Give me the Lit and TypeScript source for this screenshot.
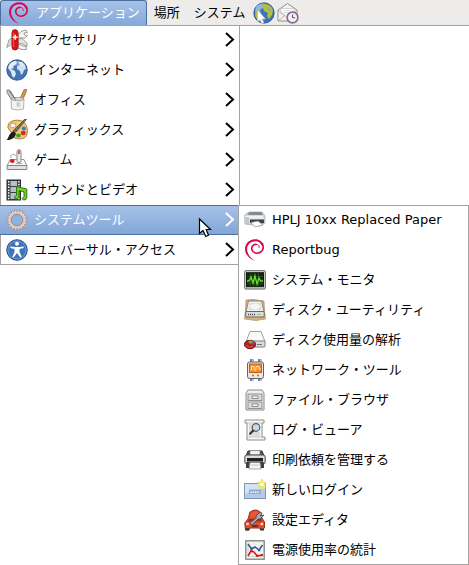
import { LitElement, html, css, svg, nothing, type SVGTemplateResult } from "lit";
import { customElement } from "lit/decorators.js";
import { classMap } from "lit/directives/class-map.js";

const swirl = svg`
  <path d="M11 22C4.800 19.500 1 15 1 10C1 4.500 5.500.4 11 .3C15.500.2 18.700 2.800 19.400 6.500L18 7C16.800 3.700 14.600 2.200 11.500 2.200C7.200 2.200 3.200 5.200 3.100 9.800C3 14.500 6 18.600 11 22Z" fill="#d70751"/>
  <path d="M18.400 4.600C19.800 8 19 11.500 16.300 13.300C13.200 15.200 9 14 8 11C7 8 9 5.300 12 5.400" fill="none" stroke="#d70751" stroke-width="1.600" stroke-linecap="round"/>
  <path d="M12 5.400C14.600 5.300 15.600 7 15 9" fill="none" stroke="#d70751" stroke-width=".9"/>`;

/** Outline of a cog with pointed teeth, centred in the 22-unit icon box. */
function cogOutline(teeth: number, inner: number, outer: number): string {
  const points: string[] = [];
  const step = (2 * Math.PI) / teeth;
  for (let i = 0; i < teeth; i++) {
    for (const [offset, radius] of [[-0.3, inner], [-0.14, outer], [0.14, outer], [0.3, inner]]) {
      const angle = (i + offset) * step;
      points.push(`${(11 + radius * Math.cos(angle)).toFixed(2)} ${(11 + radius * Math.sin(angle)).toFixed(2)}`);
    }
  }
  return `M${points.join("L")}Z`;
}

const icons: Record<string, SVGTemplateResult> = {
  swirl,
  browser: svg`
    <circle cx="11" cy="11" r="10.200" fill="#3c76b8" stroke="#244c83" stroke-width=".8"/>
    <path d="M3 5C6 1.500 10 1 12 2L11 5L7 8L8 11L4 12L2 9Z" fill="#8fb6dd"/>
    <path d="M8 3L12 2C16 2 19 5 20 8L19 13L16 17L14 14L15 11L11 9L10 6Z" fill="#b5bf3c"/>
    <path d="M14 5L17 7L18 10L16 9Z" fill="#7da2c4"/>
    <path d="M2.500 8.500L6 9L5 13L8 16L10 20C6 20 3 17 2 13Z" fill="#a7bd50"/>
    <path d="M4.500 8V20L7 17.600L9 21.500L11 20.500L9 17H12.500Z" fill="#fff" stroke="#b4babf" stroke-width=".6"/>`,
  mail: svg`
    <path d="M1 8L10.500 1.500L20 8V19H1Z" fill="#f2f2f0" stroke="#91918e"/>
    <path d="M4 6.500H17V12L11 15L4 12Z" fill="#fff" stroke="#c2c2bf" stroke-width=".7"/>
    <path d="M6 8.500H15M6 10.500H13" stroke="#d0d0cc" stroke-width=".7"/>
    <path d="M1.500 8.500L8 13.500L1.500 18.500M19.500 8.500L12 13.500" fill="none" stroke="#a3a3a0" stroke-width=".8"/>
    <circle cx="15.500" cy="15.500" r="5.400" fill="#f4f0f5" stroke="#8d6b94" stroke-width="1.700"/>
    <path d="M15.500 12.500V15.700H18" fill="none" stroke="#555"/>`,
  knife: svg`
    <path d="M7 8L3 11L.7 18.500L4 16.500L8 12Z" fill="#d9dbd7" stroke="#858984" stroke-width=".8"/>
    <path d="M12 6L15 2.500L20 1L21.500 3.500L18 4L18.500 6L21.500 6.500L19 9L12 9Z" fill="#f4f4f2" stroke="#858984" stroke-width=".8"/>
    <path d="M12 10L16 9.500L21 14L21 17.500L17 15L12 14Z" fill="#e3e5e1" stroke="#858984" stroke-width=".8"/>
    <path d="M12 15L17 17L20 17.500L20.500 20.500L16 20.500L12 19Z" fill="#f4f4f2" stroke="#858984" stroke-width=".8"/>
    <rect x="6" y=".7" width="6" height="20.300" rx="3" fill="#dd1515" stroke="#a81212"/>
    <path d="M7.400 3.500V18" stroke="#f45a50"/>
    <path d="M9.200 5.800V10.800M6.700 8.300H11.700" stroke="#fff" stroke-width="1.500"/>`,
  globe: svg`
    <circle cx="11" cy="11" r="10.200" fill="#4375b4" stroke="#2c5288" stroke-width=".9"/>
    <path d="M3 6C5 3 8 1.800 10 2L11 4L9 6L7 7L8 9L5 10L9 12L10 15L8 19L6 17L5 13L2 9Z" fill="#dce8f5"/>
    <path d="M12 3L16 3L19 6L20 10L18 11L17 14L15 16L14 12L11 10L11 7L14 6Z" fill="#d0e0f1"/>
    <path d="M2.500 9C3 0 18 -1 19.500 8C14 5.500 8 6 2.500 9Z" fill="#fff" opacity=".3"/>`,
  office: svg`
    <path d="M10 12L4 1.500Q2 0 .8 1.500Q1 5 7 12" fill="#cacdca" stroke="#777b76"/>
    <path d="M13 12L16.500 4L18 1L20.500 0L19.800 4L16 12" fill="#d69b43" stroke="#956629" stroke-width=".8"/>
    <path d="M5 10H18L17.500 20Q11.500 22 5.500 20Z" fill="#f2f2f0" stroke="#b3b5b1"/>
    <ellipse cx="11.500" cy="10" rx="6.500" ry="1.600" fill="#d8dad6" stroke="#8c8e8a" stroke-width=".7"/>
    <path d="M3.500 2L9.500 10.500" stroke="#747872" stroke-width="1.200"/>
    <path d="M10.500 13H14.500V18H10.500Z" fill="#d9dbd7"/><path d="M12 14V17" stroke="#c9ada0"/>`,
  graphics: svg`
    <path d="M2 9C1 2 9 .5 14 1.500C21 3 22 10 21 15C20 20.500 14 20.500 9 19C5 18 7 14 5 13Z" fill="#f0c57d" stroke="#b27b32"/>
    <ellipse cx="7" cy="6.500" rx="2.700" ry="2.300" fill="#fff" stroke="#b47c30" stroke-width=".7"/>
    <ellipse cx="13.500" cy="4.800" rx="2.200" ry="1.700" fill="#f3e34c"/>
    <circle cx="17.800" cy="9.500" r="2" fill="#3b79c3"/>
    <ellipse cx="17.300" cy="14" rx="2.500" ry="2.200" fill="#d92b26"/>
    <ellipse cx="12.500" cy="16.500" rx="2.500" ry="2" fill="#43a22b"/>
    <path d="M20.500 .3L10 13L7.500 11.500L18.500 .3Z" fill="#77736c" stroke="#353431" stroke-width=".7"/>
    <path d="M7.500 12L10 14.500C9 19 5 21.500 .5 21C3 19 2 15.500 7.500 12Z" fill="#1c1c1b"/>`,
  games: svg`
    <path d="M5 9C4 5 8 4 10 7" fill="none" stroke="#888" stroke-width=".8"/>
    <path d="M4 10.500H18L21 17H1Z" fill="#f6f6f4" stroke="#969893"/>
    <path d="M1.200 16.500H20.800V20.500H1.200Z" fill="#e0e1de" stroke="#858782"/>
    <rect x="11" y=".7" width="4" height="13" rx="2" fill="#ececea" stroke="#898b87"/>
    <path d="M13 1.500V5" stroke="#e32424" stroke-width="1.500"/>
    <ellipse cx="6.300" cy="12" rx="2.300" ry="1.900" fill="#dc1717"/>
    <path d="M10 14.500H16" stroke="#aaa"/>`,
  media: svg`
    <rect x="1" y="1" width="13.500" height="20" fill="#3e4140" stroke="#292b2a"/>
    <path d="M4.500 2H11V7H4.500ZM4.500 8H11V13H4.500ZM4.500 14H11V20H4.500Z" fill="#b3c2cd"/>
    <path d="M2.700 2V20.500M12.900 2V20.500" stroke="#fff" stroke-width="1.500" stroke-dasharray="1.500 1.300"/>
    <path d="M10.500 7.500L20.800 10V18.500Q20.300 21.500 17.300 21Q14.800 19.500 18 17.500V13L13 11.500V18Q11.500 21 9 19.800Q7.500 17.300 10.500 16.300Z" fill="#6fd12b" stroke="#31780c"/>`,
  gear: svg`
    <path d="${cogOutline(18, 8.7, 10.8)}" fill="#e9dedb" stroke="#a58e8a" stroke-width=".8"/>
    <circle cx="11" cy="11" r="7.200" fill="none" stroke="#cdbcb8"/>
    <circle cx="11" cy="11" r="5.800" fill="#8fb1de" stroke="#9c8785"/>`,
  access: svg`
    <circle cx="11" cy="11" r="10.300" fill="#3f75b8" stroke="#2b5590"/>
    <circle cx="11" cy="11" r="9" fill="none" stroke="#82a9d8" stroke-width=".7"/>
    <circle cx="11" cy="4.800" r="2" fill="#fff"/>
    <path d="M4.500 7.500L9 8H13L17.500 7.500L17.700 9L13.500 10V13L15.700 18L14.300 18.500L11 14L7.700 18.500L6.300 18L8.500 13V10L4.300 9Z" fill="#fff"/>`,
  laser: svg`
    <path d="M.7 6L5 3H18L21 7V14L16 17L1 15Z" fill="#d9dcdd" stroke="#a0a4a6" stroke-width=".7"/>
    <path d="M3 5L6 3H17.500L19 6H5Z" fill="#858c90"/>
    <path d="M1 7H18L20 9.500H1Z" fill="#f2f4f4"/>
    <path d="M6 10.500H20V14L15 15L6 14Z" fill="#3c4347"/>
    <path d="M7 13.500L14 12L19 16L11 18Z" fill="#fff" stroke="#8a9094" stroke-width=".7"/>
    <path d="M1 8H5V15.500L1 14.500Z" fill="#c3c8cb"/>`,
  monitor: svg`
    <rect x=".7" y="1.700" width="20.600" height="18.300" rx="1" fill="#dcdedb" stroke="#5d605c"/>
    <rect x="2.500" y="3.700" width="17" height="14" fill="#122b0e" stroke="#10190e"/>
    <path d="M3 7.500H19M3 11H19M3 14.500H19M6.500 4V17M10.500 4V17M14.500 4V17" stroke="#2f5a24" stroke-width=".7"/>
    <path d="M3 12H5L7 8L9 14L11 7L13 15L15 9L16.500 12H19" fill="none" stroke="#67df30" stroke-width="1.300"/>`,
  disk: svg`
    <path d="M2 1L9 .5L20 2L20.500 12L21.500 20L12 21.500L.5 20L1.500 11Z" fill="#d9b286" stroke="#b88a58" stroke-width=".7"/>
    <path d="M4.500 2H17.500L20 13H2Z" fill="#f2f2ef" stroke="#858782"/>
    <path d="M6 4H16L17.500 11H4.500Z" fill="#dadcd8"/>
    <ellipse cx="11" cy="7.500" rx="5" ry="3" fill="#f6f6f4"/>
    <rect x="1.800" y="12.500" width="18.400" height="5.500" rx="1" fill="#dcdedb" stroke="#656762"/>
    <path d="M4 15.500H11" stroke="#444" stroke-width="1.500" stroke-dasharray="1 1"/><path d="M13 15.500H17" stroke="#9ec681"/>`,
  usage: svg`
    <path d="M6 2.500H17L21 12.500H2Z" fill="#fafaf9" stroke="#a1a39e"/>
    <path d="M2 12H21V17Q21 18 20 18H3Q2 18 2 17Z" fill="#dcdedb" stroke="#7e807b"/>
    <path d="M13 15.500H18" stroke="#73756f"/>
    <ellipse cx="6" cy="15.500" rx="5.600" ry="4.200" fill="#b8201f" stroke="#751514"/>
    <path d="M6 15L4 12Q7 11 9.500 12.500Z" fill="#7bb343"/><path d="M6 15L9.500 12.500L11 15.500Z" fill="#436eae"/>
    <path d="M2 16.500Q5 19.500 9 17.500" stroke="#df5c52" fill="none"/>`,
  network: svg`
    <path d="M7 0V22M15 0V22" stroke="#6282b8" stroke-width="2"/>
    <path d="M9 0V22M17 0V22" stroke="#ac83aa" stroke-width="1.200"/>
    <rect x="3.500" y="3" width="16" height="16.500" rx="2" fill="#e8e9e7" stroke="#61645f"/>
    <rect x="5.500" y="5" width="12" height="8.500" fill="#f88a20" stroke="#c85f08"/>
    <path d="M6 11H7.500V7.500H10V11H12V7.500H15V10H17" fill="none" stroke="#ffe3b5"/>
    <circle cx="9" cy="16.500" r="1" fill="#80827e"/><circle cx="14" cy="16.500" r="1" fill="#80827e"/>`,
  cabinet: svg`
    <path d="M4 1H18L20 4V21H2V4Z" fill="#efefed" stroke="#8a8c87"/>
    <rect x="4" y="5" width="14" height="6.500" fill="#d9dbd7" stroke="#92948f"/>
    <rect x="4" y="13" width="14" height="6.500" fill="#d9dbd7" stroke="#92948f"/>
    <path d="M8 7H14V9.500H8ZM8 15H14V17.500H8Z" fill="#fafafa" stroke="#777974" stroke-width=".8"/>`,
  log: svg`
    <path d="M1 1H20V4H18V18H21V21H3V4H1Z" fill="#f7f7f5" stroke="#8c8e89"/>
    <path d="M3 4H18M4 18H18M5 6H16M5 8H9M5 10H8M5 12H8M5 14H16M5 16H16" stroke="#b4b6b1" stroke-width=".8"/>
    <circle cx="12" cy="8.500" r="3.800" fill="#c6daee" stroke="#555753" stroke-width="1.200"/>
    <path d="M9.300 11.500L6 14.800" stroke="#2e3436" stroke-width="2" stroke-linecap="round"/>`,
  printer: svg`
    <path d="M4 2H18L20 7H2Z" fill="#535652" stroke="#2d302d"/>
    <path d="M6 1.500H16V6H6Z" fill="#f2f3f1" stroke="#777974" stroke-width=".7"/>
    <rect x=".8" y="6" width="20.400" height="9" rx="2" fill="#dadcd8" stroke="#484b47"/>
    <path d="M3 9H19V12H3Z" fill="#1d201e"/>
    <path d="M3 13H19L19.500 18.500H2.500Z" fill="#454844" stroke="#242724"/>
    <path d="M6 13.500H16L17 20H5Z" fill="#f5f6f4" stroke="#878984" stroke-width=".7"/>
    <path d="M7 16H15" stroke="#c4c6c1"/>`,
  login: svg`
    <rect x=".5" y="4.500" width="21" height="15" fill="#b3cbe6" stroke="#8099b6"/>
    <path d="M1 5H21V10Q10 10 1 15Z" fill="#d4e3f3"/>
    <rect x="5" y="10.500" width="12" height="4.500" fill="#93aecf"/>
    <path d="M6.500 13.300H15.500" stroke="#fff" stroke-width="1.400" stroke-dasharray="1.300 1"/>
    <path d="M18 0L19.400 3.200L22 3L20.700 5.500L22 8L19.400 7.600L18 10L16.600 7.600L13.500 8L15 5.500L13.500 3L16.600 3.200Z" fill="#f5ed67" stroke="#e8dd52" stroke-width=".8"/>
    <circle cx="18" cy="5.300" r="1.900" fill="#fffde0"/>`,
  editor: svg`
    <path d="M4 10L6 3Q12-1 16 3L18 9L20.500 13V19L18 21L15 19H6L5 21H1.500L.7 14Z" fill="#e04a2f" stroke="#a62c1c"/>
    <path d="M7 4Q12 .5 15 4L16 8H6Z" fill="#ea5637"/>
    <path d="M5 10H17L18 12.500H3.500Z" fill="#8c332a"/>
    <path d="M6 14L12 9L12.500 6L17 3L18 5L16 7L20 6L16 10L14 10L8 16Z" fill="#a9aca7" stroke="#454844" stroke-width=".8"/>
    <path d="M8 17H14" stroke="#76281f" stroke-width="2"/>
    <ellipse cx="3.500" cy="15" rx="1.500" ry="1.200" fill="#f9d7b9"/><ellipse cx="17.800" cy="15" rx="1.500" ry="1.200" fill="#f9d7b9"/>
    <path d="M1.500 19H5V21.500H1.500ZM16 19.500H20V21.500H16Z" fill="#393b39"/>`,
  power: svg`
    <rect x="1.800" y="1.800" width="18.400" height="18.400" fill="#f1f2f0" stroke="#777974" stroke-width="1.200"/>
    <path d="M4 4.500V17.500H18.500" fill="none" stroke="#c7c9c5" stroke-width=".8"/>
    <path d="M4 5L7.500 10L11 8L15 11L18.500 6" fill="none" stroke="#2c5b9d" stroke-width="1.500"/>
    <path d="M4 17L7 12L10 13L13 17L18.500 16" fill="none" stroke="#d41b20" stroke-width="1.500"/>
    <path d="M6.500 8.500H8.700V10.700H6.500ZM14 10H16.200V12.200H14Z" fill="#2c5b9d"/><path d="M6 11H8.200V13.200H6ZM12 15.500H14.200V17.700H12ZM17 15H19V17H17Z" fill="#d41b20"/>`,
};

interface Entry {
  icon: string;
  label: string;
  children?: Entry[];
}

const systemTools: Entry[] = [
  { icon: "laser", label: "HPLJ 10xx Replaced Paper" },
  { icon: "swirl", label: "Reportbug" },
  { icon: "monitor", label: "システム・モニタ" },
  { icon: "disk", label: "ディスク・ユーティリティ" },
  { icon: "usage", label: "ディスク使用量の解析" },
  { icon: "network", label: "ネットワーク・ツール" },
  { icon: "cabinet", label: "ファイル・ブラウザ" },
  { icon: "log", label: "ログ・ビューア" },
  { icon: "printer", label: "印刷依頼を管理する" },
  { icon: "login", label: "新しいログイン" },
  { icon: "editor", label: "設定エディタ" },
  { icon: "power", label: "電源使用率の統計" },
];

const applications: Entry[] = [
  { icon: "knife", label: "アクセサリ", children: [] },
  { icon: "globe", label: "インターネット", children: [] },
  { icon: "office", label: "オフィス", children: [] },
  { icon: "graphics", label: "グラフィックス", children: [] },
  { icon: "games", label: "ゲーム", children: [] },
  { icon: "media", label: "サウンドとビデオ", children: [] },
  { icon: "gear", label: "システムツール", children: systemTools },
  { icon: "access", label: "ユニバーサル・アクセス", children: [] },
];

const drawIcon = (name: string) =>
  html`<svg class="icon" viewBox="0 0 22 22" aria-hidden="true">${icons[name]}</svg>`;

@customElement("app-root")
export class AppRoot extends LitElement {
  static styles = css`
    :host {
      display: block;
      min-height: 100vh;
      background: #fff;
      color: #000;
      font: 13px/20px "DejaVu Sans", "Noto Sans CJK JP", sans-serif;
    }
    * {
      box-sizing: border-box;
    }
    button {
      display: flex;
      align-items: center;
      margin: 0;
      border: 0;
      background: none;
      color: inherit;
      font: inherit;
      text-align: left;
      white-space: nowrap;
    }
    .icon {
      flex: none;
      width: 22px;
      height: 22px;
    }
    .panel {
      display: flex;
      height: 26px;
      background: #edeceb;
      border-bottom: 1px solid #a5a3a1;
    }
    .title {
      padding: 0 7px;
      gap: 6px;
    }
    .title.open {
      border: 1px solid #4b6f9f;
      border-bottom: 0;
      border-radius: 3px 3px 0 0;
      background: linear-gradient(#a6c2e9, #86a9d9);
      color: #fff;
      padding: 0 6px 0 7px;
    }
    .launchers {
      display: flex;
      gap: 2px;
      padding: 0 1px;
    }
    .launcher {
      padding: 0;
    }
    .menu {
      width: max-content;
      margin: 0;
      padding: 0;
      list-style: none;
      background: #fff;
      box-shadow: inset 0 0 0 1px #a5a3a1;
    }
    .main {
      min-width: 240px;
      margin-top: -1px;
    }
    .entry {
      position: relative;
    }
    .item {
      width: 100%;
      height: 30px;
      padding: 0 5px 0 6px;
      gap: 6px;
    }
    .item.open {
      border: solid #4b6f9f;
      border-width: 1px 0;
      background: linear-gradient(#a6c2e9, #82a6d7);
      color: #fff;
    }
    .label {
      flex: 1;
    }
    .arrow {
      flex: none;
      width: 10px;
      height: 18px;
      fill: none;
      stroke: currentColor;
      stroke-width: 2;
    }
    .sub {
      position: absolute;
      top: 0;
      left: calc(100% - 2px);
      min-width: 231px;
    }
    .pointer {
      position: absolute;
      top: 12px;
      right: 26px;
      width: 16px;
      height: 22px;
    }
  `;

  private renderEntry(entry: Entry): unknown {
    const open = !!entry.children?.length;
    return html`<li class="entry" role="none">
      <button
        class=${classMap({ item: true, open })}
        role="menuitem"
        aria-haspopup=${entry.children ? "menu" : nothing}
        aria-expanded=${entry.children ? String(open) : nothing}
      >
        ${drawIcon(entry.icon)}
        <span class="label">${entry.label}</span>
        ${entry.children
          ? html`<svg class="arrow" viewBox="0 0 10 18" aria-hidden="true">
              <path d="M1 2L8 8.500L1 15" />
            </svg>`
          : nothing}
      </button>
      ${open
        ? html`<svg class="pointer" viewBox="0 0 16 22" aria-hidden="true">
              <path
                d="M1.500 2V16.500L5 13.500L7.800 19.500L10.500 18.300L8.200 12.500H12.500Z"
                fill="#fff"
                stroke="#000"
                stroke-width="1.200"
              />
            </svg>
            <ul class="menu sub" role="menu" aria-label=${entry.label}>
              ${entry.children!.map((child) => this.renderEntry(child))}
            </ul>`
        : nothing}
    </li>`;
  }

  render() {
    return html`
      <header class="panel" role="menubar">
        <button class="title open" role="menuitem" aria-haspopup="menu" aria-expanded="true">
          ${drawIcon("swirl")}<span>アプリケーション</span>
        </button>
        <button class="title" role="menuitem" aria-haspopup="menu">場所</button>
        <button class="title" role="menuitem" aria-haspopup="menu">システム</button>
        <div class="launchers">
          <button class="launcher" aria-label="ウェブ・ブラウザ">${drawIcon("browser")}</button>
          <button class="launcher" aria-label="メール">${drawIcon("mail")}</button>
        </div>
      </header>
      <ul class="menu main" role="menu" aria-label="アプリケーション">
        ${applications.map((entry) => this.renderEntry(entry))}
      </ul>
    `;
  }
}
